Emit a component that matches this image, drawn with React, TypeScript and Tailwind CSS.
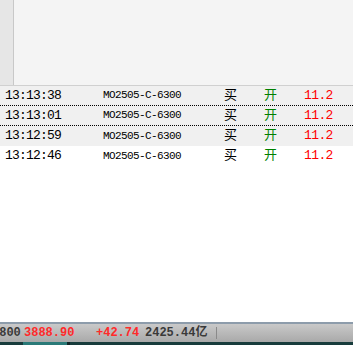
const rows = [
  { time: '13:13:38', bg: 'bg-[#f0f0f0]', dotted: true },
  { time: '13:13:01', bg: 'bg-[#f0f0f0]', dotted: true },
  { time: '13:12:59', bg: 'bg-[#f0f0f0]', dotted: false },
  { time: '13:12:46', bg: 'bg-white', dotted: false },
];

const mono = { fontFamily: '"Liberation Mono", "Noto Sans CJK SC", monospace' };

export default function App() {
  return (
    <div className="w-[353px] h-[345px] flex flex-col bg-white overflow-hidden" style={mono}>
      {/* empty top panel */}
      <div className="h-[86px] flex border-b border-[#d0d0d0] bg-[#f4f4f4]">
        <div className="w-[14px] bg-[#e6e6e6] border-r border-[#c8c8c8]" />
        <div className="flex-1" />
      </div>

      {/* trade rows */}
      <div className="flex flex-col">
        {rows.map((r) => (
          <div
            key={r.time}
            className={`h-[20px] flex items-center ${r.bg} ${
              r.dotted ? 'border-b border-dotted border-black' : ''
            }`}
          >
            <span className="w-[103px] pl-[5px] text-[13px] text-black tracking-[-0.8px]">{r.time}</span>
            <span className="w-[121px] text-[11px] text-black tracking-[-0.6px]">MO2505-C-6300</span>
            <span className="w-[40px] text-[13px] text-black">买</span>
            <span className="w-[40px] text-[13px] text-[#008000]">开</span>
            <span className="text-[13px] text-[#ff0000] tracking-[-0.6px]">11.2</span>
          </div>
        ))}
      </div>

      <div className="flex-1" />

      {/* status bar */}
      <div className="h-[20px] flex items-center border-t-2 border-[#8d9cab] bg-gradient-to-b from-[#c9c9c9] to-[#a9a9a9] text-[12px] font-bold">
        <span className="ml-[-8px] w-[32px] text-[#3a3a3a]">3800</span>
        <span className="w-[72px] text-[#ff2a2a]">3888.90</span>
        <span className="w-[49px] text-[#ff2a2a]">+42.74</span>
        <span className="text-[#3a3a3a]">2425.44亿</span>
        <span className="ml-[9px] w-px h-[12px] bg-[#8a8a8a]" />
      </div>
      <div className="h-[3px] flex bg-[#173c3c]">
        <div className="ml-[23px] w-[44px] bg-[#2a7a78]" />
        <div className="w-[3px] bg-[#0e2626]" />
      </div>
    </div>
  );
}
